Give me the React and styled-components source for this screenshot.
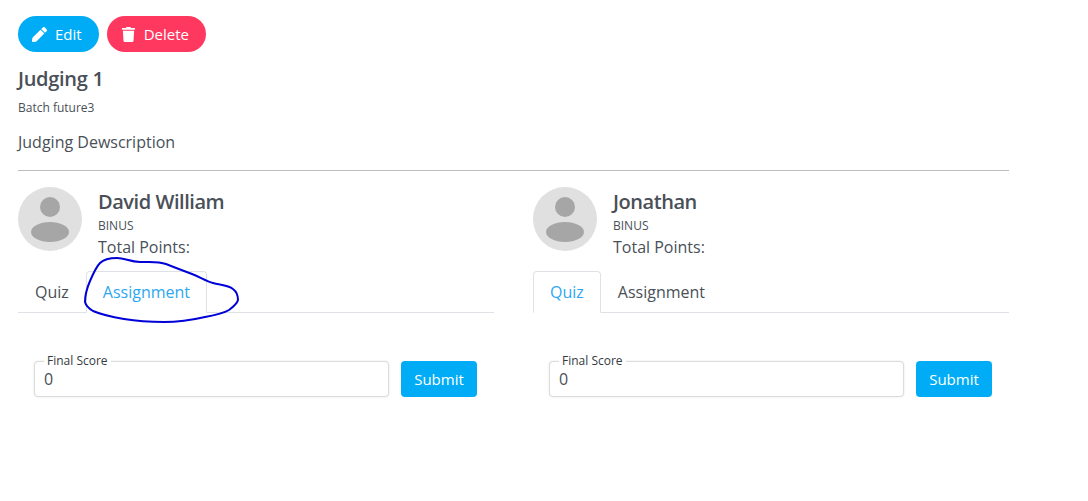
import React from "react";
import styled, { createGlobalStyle } from "styled-components";
import { FaPen, FaTrash } from "react-icons/fa";

const GlobalStyle = createGlobalStyle`
  body {
    margin: 0;
    background: #fff;
    font-family: "Open Sans", "Liberation Sans", sans-serif;
    color: #495057;
  }
`;

const participants = [
  { name: "David William", school: "BINUS", active: "Assignment" },
  { name: "Jonathan", school: "BINUS", active: "Quiz" },
];

const Participant = ({ data }) => {
  return (
    <Column>
      <Profile>
        <Avatar>
          <svg width="64" height="64" viewBox="0 0 64 64">
            <circle cx="32" cy="32" r="32" fill="#e0e0e0" />
            <circle cx="32" cy="20" r="10" fill="#a6a6a6" />
            <ellipse cx="32" cy="45" rx="19" ry="10" fill="#a6a6a6" />
          </svg>
        </Avatar>
        <Info>
          <Name>{data.name}</Name>
          <School>{data.school}</School>
          <Points>Total Points:</Points>
        </Info>
      </Profile>
      <Tabs>
        {["Quiz", "Assignment"].map((tab) => (
          <Tab key={tab} $active={tab === data.active}>
            {tab}
          </Tab>
        ))}
      </Tabs>
      <ScoreRow>
        <ScoreField>
          <ScoreLabel>Final Score</ScoreLabel>
          <ScoreInput defaultValue="0" />
        </ScoreField>
        <SubmitButton>Submit</SubmitButton>
      </ScoreRow>
    </Column>
  );
};

export default function App() {
  return (
    <Page>
      <GlobalStyle />
      <Actions>
        <PillButton $color="#00acf5">
          <FaPen size={15} />
          Edit
        </PillButton>
        <PillButton $color="#ff3860">
          <FaTrash size={15} />
          Delete
        </PillButton>
      </Actions>
      <Title>Judging 1</Title>
      <Batch>Batch future3</Batch>
      <Description>Judging Dewscription</Description>
      <Divider />
      <Columns>
        {participants.map((item) => (
          <Participant key={item.name} data={item} />
        ))}
      </Columns>
      <Scribble width="1088" height="501" viewBox="0 0 1088 501">
        <path
          d="M100 263 C104 259 110 258 117 258 C125 258 130 262 140 262 C150 262 158 261 166 264 C176 268 184 271 192 274 C200 277 206 281 213 283 C220 285 228 285 233 289 C237 292 238 296 238 300 C237 304 233 307 229 310 C224 313 216 315 205 317 C192 320 178 322 164 322 C150 322 136 321 124 319 C112 317 100 314 93 311 C88 308 86 306 85 302 C85 296 87 288 90 281 C93 274 96 267 100 263 Z"
          fill="none"
          stroke="#0000d8"
          strokeWidth="2"
        />
      </Scribble>
    </Page>
  );
}

const Page = styled.div`
  position: relative;
  width: 991px;
  height: 501px;
  box-sizing: border-box;
  margin-left: 18px;
  padding-top: 16px;
`;

const Actions = styled.div`
  display: flex;
  gap: 8px;
`;

const PillButton = styled.button`
  display: flex;
  align-items: center;
  gap: 8px;
  height: 36px;
  padding: 0 17px 0 14px;
  border: none;
  border-radius: 18px;
  background: ${(props) => props.$color};
  color: #fff;
  font-family: inherit;
  font-size: 15px;
`;

const Title = styled.h1`
  margin: 13px 0 0;
  font-size: 20px;
  line-height: 27px;
  font-weight: 600;
  color: #495057;
  letter-spacing: -0.3px;
`;

const Batch = styled.div`
  margin-top: 8px;
  font-size: 12px;
  line-height: 15px;
`;

const Description = styled.p`
  margin: 16px 0 0;
  font-size: 16px;
  line-height: 22px;
`;

const Divider = styled.hr`
  margin: 17px 0 0;
  border: none;
  border-top: 1px solid #bdbdbd;
`;

const Columns = styled.div`
  display: grid;
  grid-template-columns: 476px 476px;
  column-gap: 39px;
  margin-top: 16px;
`;

const Column = styled.section`
  display: flex;
  flex-direction: column;
`;

const Profile = styled.div`
  display: flex;
  gap: 16px;
`;

const Avatar = styled.div`
  width: 64px;
  height: 64px;
  flex: none;
`;

const Info = styled.div`
  display: flex;
  flex-direction: column;
`;

const Name = styled.div`
  font-size: 20px;
  line-height: 30px;
  font-weight: 600;
  letter-spacing: -0.45px;
`;

const School = styled.div`
  margin-top: 1px;
  font-size: 12px;
  line-height: 16px;
`;

const Points = styled.div`
  margin-top: 3px;
  font-size: 16px;
  line-height: 20px;
`;

const Tabs = styled.div`
  display: flex;
  margin-top: 14px;
  height: 42px;
  box-sizing: border-box;
  border-bottom: 1px solid #dee2e6;
`;

const Tab = styled.div`
  box-sizing: border-box;
  height: 42px;
  padding: 0 16px;
  display: flex;
  align-items: center;
  font-size: 16px;
  border: 1px solid ${(props) => (props.$active ? "#dee2e6" : "transparent")};
  border-bottom-color: ${(props) => (props.$active ? "#fff" : "transparent")};
  border-radius: 4px 4px 0 0;
  color: ${(props) => (props.$active ? "#2ea7f2" : "#495057")};
`;

const ScoreRow = styled.div`
  display: flex;
  align-items: center;
  gap: 12px;
  margin-top: 48px;
  padding: 0 17px 0 16px;
`;

const ScoreField = styled.div`
  position: relative;
  flex: 1;
`;

const ScoreLabel = styled.span`
  position: absolute;
  left: 10px;
  top: -8px;
  padding: 0 3px;
  background: #fff;
  font-size: 12px;
  line-height: 15px;
  color: #343a40;
`;

const ScoreInput = styled.input`
  display: block;
  width: 100%;
  height: 36px;
  box-sizing: border-box;
  padding: 0 9px;
  border: 1px solid #dcdcdc;
  border-radius: 4px;
  box-shadow: 0 0 2px rgba(0, 0, 0, 0.12);
  font-family: inherit;
  font-size: 16px;
  color: #495057;
  outline: none;
`;

const SubmitButton = styled.button`
  height: 36px;
  width: 76px;
  border: none;
  border-radius: 4px;
  background: #00acf5;
  color: #fff;
  font-family: inherit;
  font-size: 15px;
`;

const Scribble = styled.svg`
  position: absolute;
  left: -18px;
  top: 0;
  pointer-events: none;
`;
